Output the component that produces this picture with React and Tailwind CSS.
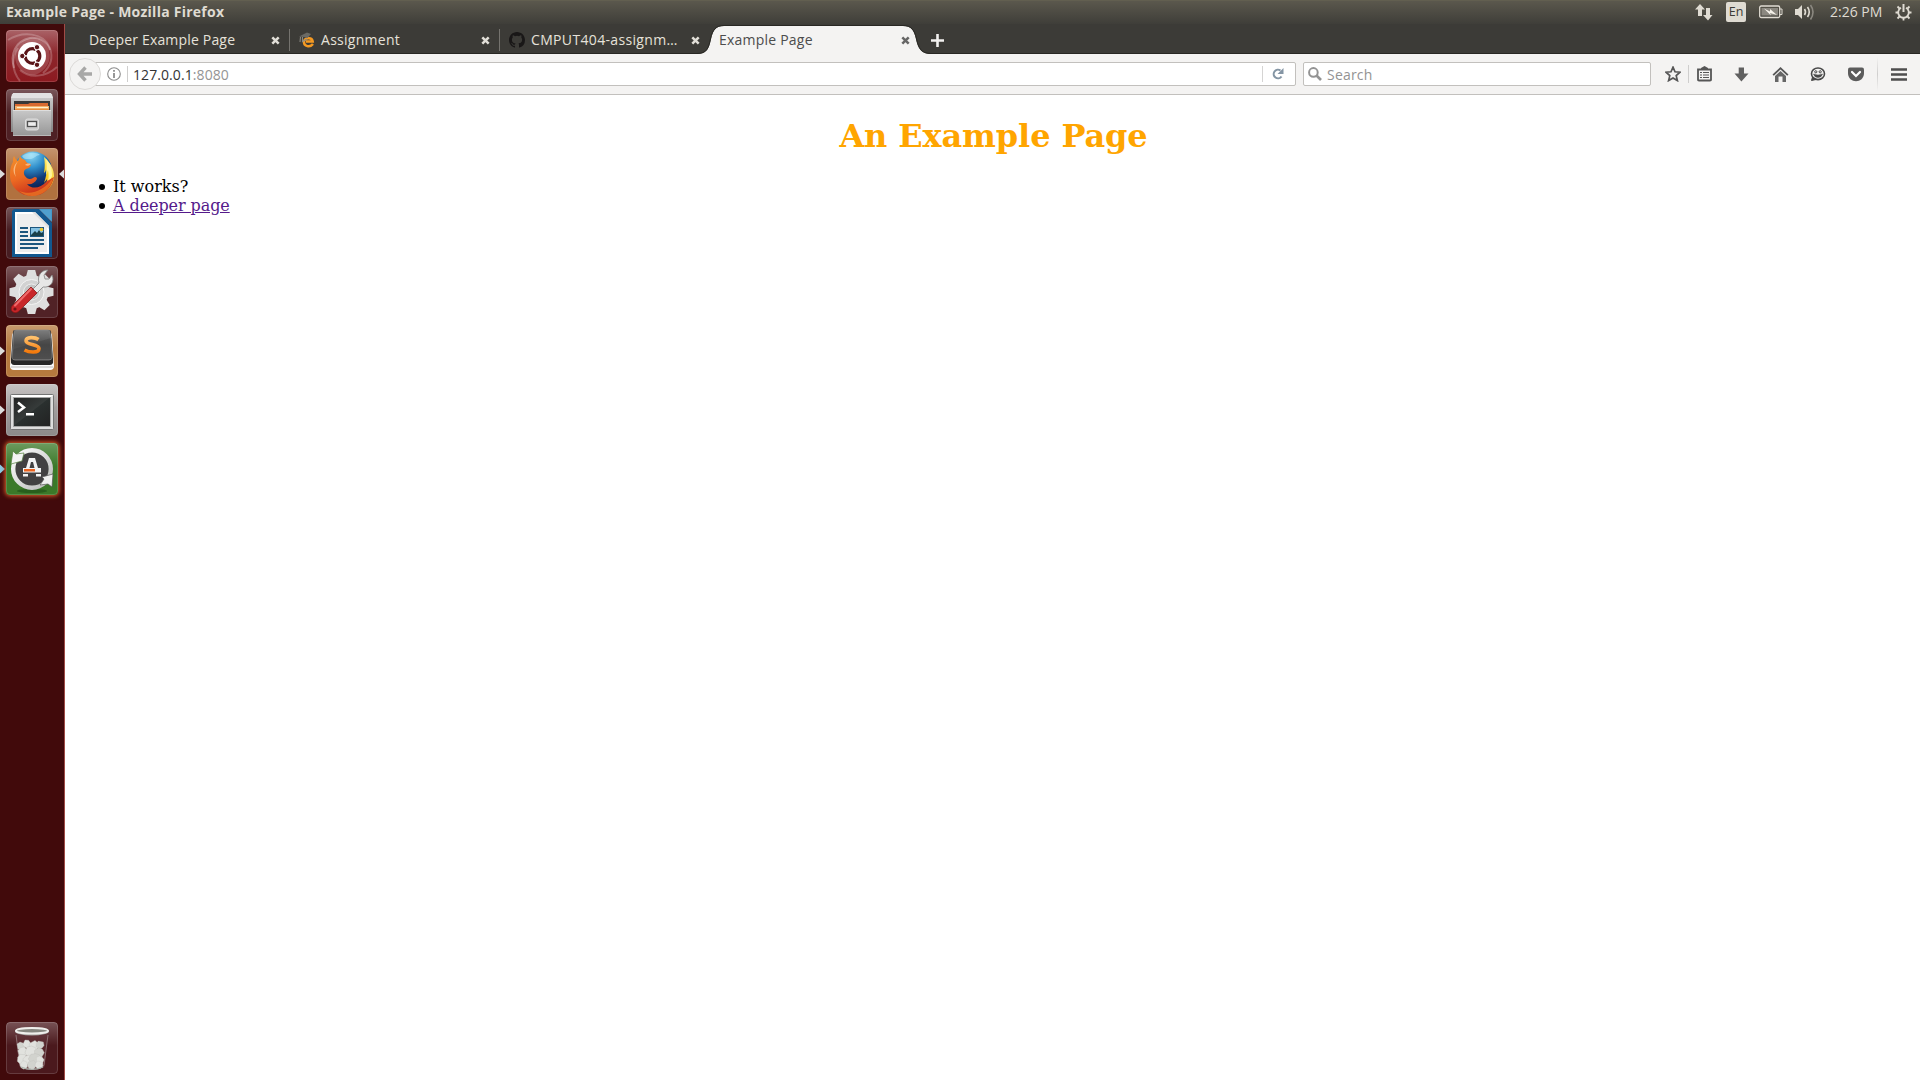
const ui = 'font-["Open_Sans","Noto_Sans",sans-serif]';

function Tile({ bg, left, right, leftColor = '#dcdcdc', glow, children }) {
  return (
    <div className="relative flex h-[52px] w-full shrink-0 justify-center pr-px">
      {left && (
        <svg className="absolute left-0 top-[21px]" width="5" height="10" viewBox="0 0 5 10">
          <path d="M0 0.500 5 5 0 9.500z" fill={leftColor} />
        </svg>
      )}
      <div className={`relative h-[52px] w-[52px] overflow-hidden rounded-[4px] ${bg} ${glow ? 'shadow-[0_0_4px_1px_#e0642c]' : ''}`}>
        <div className="absolute inset-0 rounded-[4px] bg-linear-to-b from-white/25 to-transparent to-45%" />
        <svg className="relative block" width="52" height="52" viewBox="0 0 52 52">{children}</svg>
        <div className="absolute inset-0 rounded-[4px] border border-white/15" />
      </div>
      {right && (
        <svg className="absolute left-[59px] top-[21px]" width="5" height="10" viewBox="0 0 5 10">
          <path d="M5 0.500 0 5 5 9.500z" fill="#dcdcdc" />
        </svg>
      )}
    </div>
  );
}

function Dash() {
  return (
    <Tile bg="bg-linear-to-b from-[#8e2f35] to-[#8c1a20]">
      <g fill="none" stroke="#fff">
        <path d="M2 10C16 1 38 2 44 18c3 9 1 18-7 25" strokeOpacity=".22" strokeWidth="2" />
        <path d="M8 38C4 24 9 11 24 8c9-1 17 3 20 12" strokeOpacity=".3" strokeWidth="2" />
        <path d="M14 51C5 40 6 27 12 18M51 37C40 47 24 49 14 40" strokeOpacity=".22" strokeWidth="2" />
      </g>
      <path d="M9 20C16 5 38 3 43 21c3 10-3 20-14 24C17 46 7 36 9 20z" fill="#fff" fillOpacity=".16" />
      <circle cx="26" cy="26" r="14" fill="#fff" />
      <circle cx="26.500" cy="26" r="7.300" fill="none" stroke="#5a1518" strokeWidth="3.200" strokeDasharray="13.800 1.500" strokeDashoffset="6.900" />
      <g fill="#5a1518" stroke="#fff" strokeWidth="1">
        <circle cx="16.300" cy="26" r="2.700" />
        <circle cx="31" cy="17.200" r="2.700" />
        <circle cx="31" cy="34.800" r="2.700" />
      </g>
    </Tile>
  );
}

function Files() {
  return (
    <Tile bg="bg-[#4e2024]">
      <defs>
        <linearGradient id="cab" x2="0" y2="1"><stop stopColor="#cfcfcf" /><stop offset="1" stopColor="#858585" /></linearGradient>
        <linearGradient id="cab2" x2="0" y2="1"><stop stopColor="#c8c8c8" /><stop offset="1" stopColor="#969696" /></linearGradient>
      </defs>
      <path d="M6 5 46 5 47 9V43H5V9z" fill="url(#cab)" />
      <path d="M7 4H45L47 9H5z" fill="#e2e2e2" />
      <path d="M8 12H44V24H8z" fill="#383838" />
      <path d="M9 15H22L24 14H42V24H9z" fill="#d96a31" />
      <path d="M9 17H43V23H9z" fill="#f3b26a" />
      <path d="M11 18H42V19H11z" fill="#fff0cf" />
      <path d="M9 20H43V23H9z" fill="#e88c3c" />
      <path d="M7 21H45V47H7z" fill="url(#cab2)" />
      <path d="M7 21.500H45" stroke="#dedede" />
      <path d="M7 46.500H45" stroke="#b9b9b9" />
      <rect x="19.500" y="30" width="13" height="11" rx="2" fill="#cbcbcb" stroke="#dedede" />
      <rect x="21.500" y="32.500" width="9" height="5" fill="#ededed" stroke="#505050" strokeWidth="1.300" />
    </Tile>
  );
}

function Firefox() {
  return (
    <Tile bg="bg-[#b1713f]" left right>
      <defs>
        <radialGradient id="globe" cx=".45" cy=".1" r=".85"><stop stopColor="#8fdaf5" /><stop offset=".4" stopColor="#2f8ecb" /><stop offset=".75" stopColor="#123b78" /><stop offset="1" stopColor="#0c2456" /></radialGradient>
        <linearGradient id="fox" x1="0" y1="0" x2=".4" y2="1"><stop stopColor="#f3912c" /><stop offset=".55" stopColor="#ec6a22" /><stop offset="1" stopColor="#c9301c" /></linearGradient>
        <linearGradient id="tail" x1=".8" y1="0" x2=".2" y2="1"><stop stopColor="#fff7a0" /><stop offset=".45" stopColor="#fbd324" /><stop offset="1" stopColor="#f08a1f" /></linearGradient>
      </defs>
      <circle cx="27" cy="22.500" r="19" fill="url(#globe)" />
      <path d="M16 8C22 4 31 4 34 7c-4 0-5 3-9 4-4 0-7 1-9-3z" fill="#b6e7fa" opacity=".6" />
      <path d="M38 9c7 6 10 13 10 19 0 9-7 16-15 18 4-4 8-9 8-15-1 1-2 3-3 4 2-6 3-10 2-14 0 2-1 3-2 4 1-6 1-11 0-16z" fill="url(#tail)" />
      <path d="M40 11c5 5 6 11 6 17-2 4-2 6-5 9 2-7 2-10 1-15-1 2-1 4-2 5 1-7 1-11 0-16z" fill="#fff49c" />
      <path d="M8 8c1 2 2 4 4 5l2-5c1 2 2 3 5 4 1 2 2 3 5 4 2 1 0 4-4 5-2 1-3 4-1 7 2 3 5 4 8 2 2-2 4-1 4 1-2 4-6 6-10 5 5 6 14 4 19-2 1-1 4-3 8-5-2 10-10 19-22 19C14 48 4 39 4 27c0-6 1-10 3-13 0-2 0-4 1-6z" fill="url(#fox)" />
      <path d="M47 30c-2 10-10 18-21 18-5 0-9-2-13-5 13 5 25-1 34-13z" fill="#f58c25" opacity=".6" />
      <path d="M12 13c-3 5-4 10-2 16-4-6-3-11 2-16zM19 17c1-1 3-2 6-1-2 2-3 2-6 1z" fill="#ffd0a0" opacity=".7" />
    </Tile>
  );
}

function Writer() {
  return (
    <Tile bg="bg-[#471d22]">
      <path d="M8 2H33L46 16V50H6V4z" fill="#12588f" />
      <path d="M9 5H29L43 19V47H9z" fill="#fff" />
      <path d="M11 7H28L41 20V45H11z" fill="#eee" />
      <path d="M29 5 43 19V22L26 5z" fill="#dedede" />
      <path d="M33 2H46V15z" fill="#4498c9" />
      <path d="M34 3H45V14z" fill="#5ca8d4" opacity=".5" />
      <path d="M14 20H22V22H14zM14 24H22V26H14zM14 28H22V30H14zM14 32H38V34H14zM14 36H38V38H14zM14 40H32V42H14z" fill="#1c567e" />
      <path d="M24 20H38V30H24z" fill="#1c567e" />
      <path d="M25 21H37V28H25z" fill="#85c1e2" />
      <path d="M25 28 29 24 31 26 33 23 35 26 37 25V29H25z" fill="#193f49" />
      <circle cx="35.500" cy="22.500" r="1.800" fill="#edc92f" />
    </Tile>
  );
}

function Settings() {
  return (
    <Tile bg="bg-[#512226]">
      <g transform="translate(25.500 26)" fill="#dedede">
        {[0, 45, 90, 135, 180, 225, 270, 315].map((a) => (
          <path key={a} d="M-5.500 -15 -3.700 -22H3.700L5.500 -15z" transform={`rotate(${a})`} />
        ))}
        <circle r="17" />
        <circle r="12.500" fill="#d2d2d2" stroke="#f3f3f3" />
        <circle r="8" fill="#c4c4c4" stroke="#eee" />
      </g>
      <path d="M24 26 33 17C31 10 35 4 42 4L38 9 39 13 43 13 46 9C49 15 45 22 37 21L28 30z" fill="#e7e7e7" stroke="#828282" strokeWidth=".800" />
      <path d="M25 21 31 27 13 45C9 49 3 45 6 40z" fill="#c82629" stroke="#8f1717" strokeWidth=".800" />
      <path d="M25 23 9 39.500" stroke="#ef696a" strokeWidth="2" strokeLinecap="round" />
      <circle cx="9" cy="43" r="1.600" fill="#711416" />
    </Tile>
  );
}

function Sublime() {
  return (
    <Tile bg="bg-[#b6793e]" left>
      <defs>
        <linearGradient id="key" x2="0" y2="1"><stop stopColor="#7d7d7d" /><stop offset=".5" stopColor="#4d4d4d" /><stop offset="1" stopColor="#5b5b5b" /></linearGradient>
        <linearGradient id="es" x2="0" y2="1"><stop stopColor="#ffc06a" /><stop offset="1" stopColor="#f47a0c" /></linearGradient>
      </defs>
      <path d="M6 10Q6 8 8 8H44Q46 8 46 10L48 41Q48 45 44 45H8Q4 45 4 41z" fill="#fafafa" />
      <path d="M5 42H47" stroke="#b8b8b8" />
      <path d="M9 5H43Q45 5 45 7L47 34V38Q46 40 44 40H8Q6 40 5 38V34L7 7Q7 5 9 5z" fill="#262626" />
      <path d="M10 5H42Q44 5 44 7L46 32Q46 35 43 35H9Q6 35 6 32L8 7Q8 5 10 5z" fill="url(#key)" stroke="#8a8a8a" strokeWidth=".700" />
      <path d="M8 24 45 13 46 34H6z" fill="#383838" opacity=".35" />
      <path d="M32.500 14.500C29 12 20 11.500 20 16c0 4 13 3 13 7.500 0 5-10 4-14.500 1.500" fill="none" stroke="url(#es)" strokeWidth="3.600" />
    </Tile>
  );
}

function Terminal() {
  return (
    <Tile bg="bg-linear-to-b from-[#b5b0b0] to-[#8c898a]" left>
      <defs><linearGradient id="scr" x1="0" y1="0" x2="1" y2="1"><stop stopColor="#222" /><stop offset=".48" stopColor="#363b3a" /><stop offset=".5" stopColor="#2a302f" /><stop offset="1" stopColor="#222" /></linearGradient></defs>
      <rect x="4.500" y="10.500" width="43" height="35" rx="1" fill="#ddd" stroke="#747474" />
      <path d="M5 11H47L45 13H7z" fill="#fff" />
      <rect x="7.500" y="13.500" width="37" height="29" fill="url(#scr)" stroke="#a5a5a5" />
      <path d="M12 18.500 18 23.500 12 28" fill="none" stroke="#fff" strokeWidth="2.500" />
      <path d="M20 29H28V31.500H20z" fill="#fff" />
    </Tile>
  );
}

function Updater() {
  return (
    <Tile bg="bg-[#3b7929]" left leftColor="#86cbe8" glow>
      <defs><linearGradient id="ring" x2="1" y2="1"><stop stopColor="#fff" /><stop offset="1" stopColor="#b8b8b8" /></linearGradient></defs>
      <ellipse cx="26" cy="48" rx="15" ry="2" fill="#1d4e16" opacity=".6" />
      <circle cx="26" cy="26" r="17" fill="#424142" />
      <circle cx="26" cy="26" r="18.800" fill="none" stroke="url(#ring)" strokeWidth="4.400" />
      <path d="M7 8 10 11 18 10 16 18 5 21z" fill="#f4f4f4" stroke="#54803f" strokeWidth=".700" />
      <path d="M47 31 46 44 42 41 34 42 38 36 36 34z" fill="#f0f0f0" stroke="#555" strokeWidth=".700" />
      <path d="M23 15H29L32 25H28.500L27 19H25L23.500 25H20z" fill="#f3f3f3" />
      <path d="M17 25H35V29.500H17zM17 31H22V33.500H17zM30 31H35V33.500H30z" fill="#f3f3f3" />
      <path d="M18 26H29V28.500H18z" fill="#ec6420" />
    </Tile>
  );
}

function Trash() {
  const clumps = [[15, 24, 4], [21, 22, 4], [28, 24, 5], [34, 23, 4], [17, 30, 5], [25, 30, 6], [33, 31, 5], [16, 37, 5], [22, 38, 5], [29, 37, 6], [34, 38, 4], [18, 43, 4], [26, 43, 4.5], [33, 43, 4]];
  return (
    <Tile bg="bg-[#4b191d]">
      <path d="M9 10H42L39 44Q38 48 26 48T13 44z" fill="#64383f" opacity=".45" />
      <path d="M10 13 14 43Q15 47 26 47T38 43L42 13" fill="none" stroke="#b4a5a7" strokeWidth="1" opacity=".55" />
      {clumps.map(([x, y, r], i) => (
        <path key={i} transform={`translate(${x} ${y}) rotate(${i * 37}) scale(${r / 4})`} d="M-4-2-1-4 2-3 4-1 3 3 0 4-3 3z" fill={i % 3 ? '#e1e2de' : '#d2d3ce'} stroke="#c2c3be" strokeWidth=".300" />
      ))}
      <path d="M15 45Q26 50 37 45" fill="none" stroke="#adb4ad" strokeWidth="1.200" />
      <ellipse cx="26" cy="9.500" rx="17" ry="4" fill="#a6a6a3" />
      <ellipse cx="26" cy="8.800" rx="16" ry="2.800" fill="#85867f" stroke="#efefec" strokeWidth="2" />
    </Tile>
  );
}

function Tab({ icon, title, sep, active, track }) {
  return (
    <div className={`relative flex h-[29px] w-[210px] shrink-0 items-center pl-[10px] pt-[3px] ${active ? 'text-[#4c4c4c]' : 'text-[#e6e2da]'}`}>
      {sep && <span className="absolute left-0 top-[5px] h-[22px] w-px bg-[#75736e]" />}
      {active && (
        <svg className="absolute -left-[12px] top-[1px]" width="238" height="30" viewBox="0 0 238 30">
          <path d="M0 29C10 29 12 23 14 14 16 5 19 1 27 1H206C214 1 217 5 219 14 221 23 224 29 234 29V30H0z" fill="#f4f3f2" />
          <path d="M0 28.500C10 28.500 11.500 23 13.500 14 15.500 4.500 19 .500 27 .500H206C214 .500 217.500 4.500 219.500 14 221.500 23 224 28.500 234 28.500" fill="none" stroke="#282723" />
        </svg>
      )}
      {icon}
      <span className={`relative whitespace-nowrap text-[14px] leading-[20px] ${track}`}>{title}</span>
      <svg className="relative ml-auto mr-[9.5px] shrink-0" width="9" height="9" viewBox="0 0 9 9">
        <path d="M1.300 1.300 7.700 7.700M7.700 1.300 1.300 7.700" stroke={active ? '#666' : '#e2dfd8'} strokeWidth="2.500" />
      </svg>
    </div>
  );
}

const moodle = (
  <svg className="mr-[6px] shrink-0" width="16" height="16" viewBox="0 0 16 16">
    <path d="M14 12C11 15.800 4.800 14.500 5 10 5.300 5.500 13 4.500 13.700 9.500H7" fill="none" stroke="#f59a22" strokeWidth="2.500" />
    <path d="M0 4.500 8 .500 12 2 8.500 6 5 5z" fill="#6b6a65" />
    <path d="M1.500 5 1 10M3.500 5V9.500L8 7" stroke="#8a8982" fill="none" strokeWidth="1.100" />
  </svg>
);
const github = (
  <svg className="mr-[6px] shrink-0" width="16" height="16" viewBox="0 0 16 16" fill="#191717">
    <path d="M8 0C3.580 0 0 3.580 0 8c0 3.540 2.290 6.530 5.470 7.590.4.070.55-.17.55-.38v-1.490c-2.230.48-2.700-.95-2.700-.95-.36-.92-.89-1.170-.89-1.170-.73-.5.060-.49.060-.49.800.060 1.230.83 1.230.83.720 1.220 1.870.87 2.330.66.070-.52.280-.87.510-1.070-1.780-.2-3.640-.89-3.640-3.950 0-.87.310-1.590.820-2.150-.08-.2-.36-1.020.080-2.120 0 0 .67-.21 2.200.82a7.600 7.600 0 0 1 4 0c1.530-1.040 2.200-.82 2.200-.82.440 1.100.160 1.920.080 2.120.51.560.82 1.270.82 2.150 0 3.070-1.870 3.750-3.650 3.950.29.250.54.730.54 1.480v2.200c0 .21.150.46.550.38A8 8 0 0 0 16 8c0-4.420-3.580-8-8-8z" />
  </svg>
);

function TopBar() {
  return (
    <header className="flex h-6 shrink-0 items-center bg-linear-to-b from-[#5c594e] to-[#3f3e39] pl-[6px] text-[#dfdbd2] shadow-[inset_0_1px_0_#625f50]">
      <span className="whitespace-nowrap text-[14px] font-bold leading-6 tracking-[0.25px]">Example Page - Mozilla Firefox</span>
      <div className="ml-auto flex items-center">
        <svg width="18" height="17" viewBox="0 0 18 17" fill="#dfdbd2"><path d="M5 0 10 5.500H7V12H3V5.500H0zM11 4H15V11H17.500L13 16.500 8 11H11z" /></svg>
        <span className="ml-[13px] flex h-5 w-5 items-center justify-center rounded-[2px] bg-[#dfdbd2] text-[12.500px] text-[#3c3b37]">En</span>
        <svg className="ml-[13px]" width="24" height="14" viewBox="0 0 24 14">
          <rect x=".700" y="1" width="20" height="11.500" rx="1.500" fill="none" stroke="#dfdbd2" strokeWidth="1.300" />
          <path d="M2.500 3H19V10.500H2.500z" fill="#8b8880" />
          <path d="M21 4H23V9.500H21" fill="none" stroke="#dfdbd2" />
          <path d="M5 3.500 11 6.500 11 4 18 10 11 8 12 10.500z" fill="#f4f1e9" />
        </svg>
        <svg className="ml-[12px]" width="21" height="18" viewBox="0 0 21 18" fill="none" stroke="#dfdbd2" strokeWidth="1.600">
          <path d="M0 6H3L7 2V16L3 12H0z" fill="#dfdbd2" stroke="none" />
          <path d="M9.500 6Q11.500 9 9.500 12" /><path d="M12.500 4Q16 9 12.500 14" /><path d="M15.500 2Q20.500 9 15.500 16.500" stroke="#8b8880" />
        </svg>
        <span className="ml-[14px] w-[52px] whitespace-nowrap text-[14px] leading-6 tracking-[0px]">2:26 PM</span>
        <svg className="ml-[13px] mr-[8px]" width="17" height="17" viewBox="0 0 17 17" fill="none" stroke="#dfdbd2">
          <path d="M6 3.800A5.300 5.300 0 1 0 11 3.800" strokeWidth="1.800" />
          <path d="M8.500 0V8" strokeWidth="2" />
          <path d="M8.500 14V16.500M.500 8.500H3M14 8.500H16.500M2.500 2.500 4.500 4.500M14.500 2.500 12.500 4.500M2.500 14.500 4.500 12.500M14.500 14.500 12.500 12.500" strokeWidth="1.800" />
        </svg>
      </div>
    </header>
  );
}

function Toolbar() {
  return (
    <div className="flex h-[41px] shrink-0 items-center border-b border-[#c2c0bd] bg-[#f4f3f2] pl-[4px]">
      <div className="relative z-10 flex h-8 w-8 shrink-0 items-center justify-center rounded-full border border-[#dcdad8] bg-[#f4f3f2]">
        <svg width="16" height="16" viewBox="0 0 16 16"><path d="M8.500 1.500 2.500 8 8.500 14.500M3 8H15" fill="none" stroke="#a8a8a7" strokeWidth="3.400" /></svg>
      </div>
      <div className="-ml-[9px] flex h-6 w-[1204px] shrink-0 items-center rounded-[2px] border border-[#c2c0bd] bg-white pl-[14px]">
        <svg width="14" height="14" viewBox="0 0 14 14" fill="none" stroke="#8c8c8c"><circle cx="7" cy="7" r="6.300" strokeWidth="1.100" /><path d="M7 6V11M7 3V4.800" strokeWidth="1.800" /></svg>
        <span className="ml-[6px] h-4 w-px bg-[#cfcecd]" />
        <span className="ml-[5px] whitespace-nowrap pt-[2px] text-[14px] leading-5 tracking-[0.08px] text-[#333]">127.0.0.1<span className="text-[#949494]">:8080</span></span>
        <span className="ml-auto h-4 w-px bg-[#d5d4d3]" />
        <svg className="ml-[9px] mr-[11px]" width="12" height="12" viewBox="0 0 12 12"><path d="M9.500 8.500A4.300 4.300 0 1 1 8.500 2.500" fill="none" stroke="#8495a4" strokeWidth="2.100" /><path d="M11.500 0V6H5.500z" fill="#8495a4" /></svg>
      </div>
      <div className="ml-[7px] flex h-6 w-[348px] shrink-0 items-center rounded-[2px] border border-[#c2c0bd] bg-white pl-[4px]">
        <svg width="14" height="14" viewBox="0 0 14 14" fill="none" stroke="#939393"><circle cx="5.400" cy="5.400" r="4.300" strokeWidth="2" /><path d="M8.500 8.500 13 13" strokeWidth="2.600" /></svg>
        <span className="ml-[5px] pt-[2px] text-[14px] leading-5 tracking-[0.2px] text-[#939393]">Search</span>
      </div>
      <div className="ml-[14px] flex items-center text-[#565656]">
        <svg width="16" height="16" viewBox="0 0 16 16"><path d="M8 1.200 10 5.800 15 6.200 11.200 9.600 12.400 14.600 8 12 3.600 14.600 4.800 9.600 1 6.200 6 5.800z" fill="none" stroke="currentColor" strokeWidth="1.700" /></svg>
        <span className="ml-[7px] h-[18px] w-px bg-[#cfcecd]" />
        <svg className="ml-[8px]" width="15" height="16" viewBox="0 0 15 16"><path d="M1 3.500H14V14Q14 14.500 13 14.500H2Q1 14.500 1 14z" fill="none" stroke="currentColor" strokeWidth="1.800" /><path d="M4 3.500V2L7.500 0 11 2V3.500z" fill="currentColor" /><path d="M3 6.500H5M6 6.500H12M3 9H5M6 9H12M3 11.500H5M6 11.500H12" stroke="currentColor" strokeWidth="1.200" fill="none" /></svg>
        <svg className="ml-[22px]" width="15" height="15" viewBox="0 0 15 15"><path d="M4.700.5H10V6.500H14.500L7.400 14.500.500 6.500H4.700z" fill="#606060" /></svg>
        <svg className="ml-[23px]" width="17" height="15" viewBox="0 0 17 15" fill="currentColor"><path d="M8.500 0 16.500 7.500 15.200 8.700 8.500 2.500 1.800 8.700.5 7.500z" /><path d="M8.500 4 14 9V15H10.500V9.500H6.500V15H3V9z" fill="#666" /></svg>
        <svg className="ml-[21px]" width="16" height="15" viewBox="0 0 16 15" fill="none" stroke="#484848"><ellipse cx="8" cy="6.800" rx="6.500" ry="5.800" strokeWidth="1.600" /><path d="M2.500 10 1.500 13.500 6 12.500z" fill="#484848" /><path d="M3.500 7Q8 9 12.500 7Q11.500 10.500 8 10.500T3.500 7z" fill="#484848" strokeWidth=".500" /><circle cx="5.800" cy="4.800" r="1.100" /><circle cx="10.200" cy="4.800" r="1.100" /></svg>
        <svg className="ml-[22px]" width="16" height="15" viewBox="0 0 16 15"><path d="M2 .500H14Q16 .500 16 2.500V6C16 17 0 17 0 6V2.500Q0 .500 2 .500z" fill="#5c5c5c" /><path d="M4 5 8 9 12 5" fill="none" stroke="#fff" strokeWidth="2.200" strokeLinecap="round" /></svg>
        <span className="ml-[13px] h-[34px] w-px bg-linear-to-b from-transparent via-[#cfcecd] to-transparent" />
        <svg className="ml-[13px]" width="16" height="13" viewBox="0 0 16 13"><path d="M0 1.500H16M0 6.500H16M0 11.500H16" stroke="#4e4e4e" strokeWidth="2.600" /></svg>
      </div>
    </div>
  );
}

function Item({ children }) {
  return (
    <li className="flex items-center">
      <span className="mr-[8px] mt-[1px] h-[6px] w-[6px] rounded-full bg-black" />
      {children}
    </li>
  );
}

export default function App() {
  return (
    <div className={`flex h-screen w-full flex-col overflow-hidden bg-white ${ui}`}>
      <TopBar />
      <div className="flex min-h-0 flex-1">
        <aside className="flex w-[65px] shrink-0 flex-col gap-[7px] border-r border-[#a04b46] bg-[#410a0b] pb-[6px] pt-[6px]">
          <Dash />
          <Files />
          <Firefox />
          <Writer />
          <Settings />
          <Sublime />
          <Terminal />
          <Updater />
          <div className="mt-auto"><Trash /></div>
        </aside>
        <main className="flex min-w-0 flex-1 flex-col">
          <div className="flex h-[30px] shrink-0 border-b border-[#282723] bg-[#3c3b37] pl-[14px]">
            <Tab title="Deeper Example Page" track="tracking-[0.18px]" />
            <Tab sep icon={moodle} title="Assignment" track="tracking-[0.28px]" />
            <Tab sep icon={github} title="CMPUT404-assignm…" track="tracking-[0.34px]" />
            <Tab active title="Example Page" track="tracking-[0.22px]" />
            <svg className="ml-[12px] mt-[10px]" width="13" height="13" viewBox="0 0 13 13"><path d="M6.500 0V13M0 6.500H13" stroke="#f2f1ef" strokeWidth="2.600" /></svg>
          </div>
          <Toolbar />
          <article className='flex-1 bg-white px-2 font-["DejaVu_Serif",serif] text-[16px] leading-[19px] text-black'>
            <h1 className="mt-[22px] pl-[2px] text-center text-[32px] font-bold leading-[38px] tracking-[-0.12px] text-[#ffa500]">An Example Page</h1>
            <ul className="mt-[22px] pl-[26px]">
              <Item>It works?</Item>
              <Item><a href="#deeper" className="tracking-[-0.08px] text-[#551a8b] underline">A deeper page</a></Item>
            </ul>
          </article>
        </main>
      </div>
    </div>
  );
}
